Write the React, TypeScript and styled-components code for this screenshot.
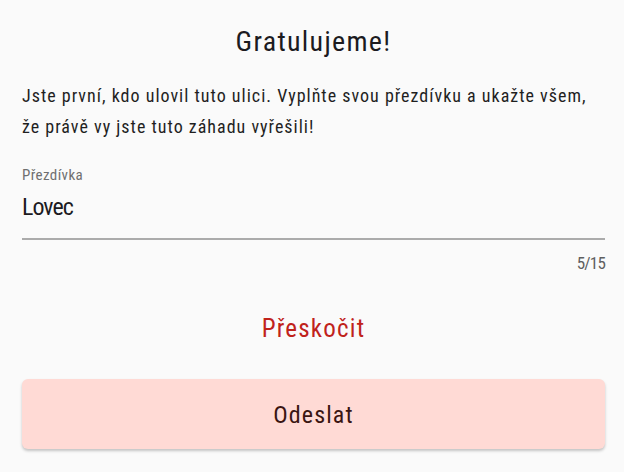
import { createGlobalStyle, styled } from "styled-components";

const GlobalStyle = createGlobalStyle`
  html, body {
    margin: 0;
    padding: 0;
    background: #fafafa;
  }
  body {
    font-family: Roboto, "DejaVu Sans Condensed", sans-serif;
    font-stretch: 80%;
    font-weight: 370;
    color: #1f1f1f;
  }
`;

const Wrapper = styled.div`
  display: flex;
  flex-direction: column;
  padding: 24px 19px 0 22px;
  min-height: 472px;
  box-sizing: border-box;
`;

const Title = styled.h2`
  margin: 0;
  font-size: 28px;
  line-height: 36px;
  font-weight: 370;
  letter-spacing: 1.3px;
  text-align: center;
  color: #1c1b1f;
`;

const Message = styled.p`
  margin: 20px 0 0;
  font-size: 18px;
  line-height: 31px;
  letter-spacing: 1px;
  color: #1f1f1f;
`;

//  Nickname field
const Field = styled.label`
  display: flex;
  flex-direction: column;
  margin-top: 24px;
  border-bottom: 2px solid #ababab;
  padding-bottom: 17px;
`;

const FieldLabel = styled.span`
  font-size: 15px;
  line-height: 18px;
  letter-spacing: 0.4px;
  color: #6f6f6f;
`;

const FieldInput = styled.input`
  margin-top: 9px;
  padding: 0;
  border: none;
  outline: none;
  background: transparent;
  font-family: inherit;
  font-weight: inherit;
  font-stretch: 75%;
  font-size: 24px;
  line-height: 28px;
  height: 28px;
  letter-spacing: -1px;
  color: #1c1b1f;
`;

const Counter = styled.div`
  margin-top: 13px;
  font-size: 17px;
  font-stretch: 75%;
  line-height: 20px;
  letter-spacing: -0.8px;
  color: #5f5f5f;
  text-align: right;
`;

const TextButton = styled.button`
  align-self: center;
  margin-top: 41px;
  padding: 0 8px;
  border: none;
  background: none;
  font-family: inherit;
  font-weight: inherit;
  font-stretch: inherit;
  font-size: 25px;
  line-height: 30px;
  letter-spacing: 1.2px;
  color: #c0221b;
  cursor: pointer;
`;

const SubmitButton = styled.button`
  margin-top: 35px;
  height: 70px;
  padding: 2px 0 0;
  border: none;
  border-radius: 6px;
  background: #ffdad5;
  box-shadow: 0 2px 3px rgba(0, 0, 0, 0.22);
  font-family: inherit;
  font-weight: inherit;
  font-stretch: inherit;
  font-size: 24px;
  letter-spacing: 1.1px;
  color: #3a1512;
  cursor: pointer;
`;

function App() {
  const nickname = "Lovec";
  const maxLength = 15;

  return (
    <>
      <GlobalStyle />
      <Wrapper>
        <Title>Gratulujeme!</Title>
        <Message>
          Jste první, kdo ulovil tuto ulici. Vyplňte svou přezdívku a ukažte
          všem,
          <br />
          že právě vy jste tuto záhadu vyřešili!
        </Message>
        <Field>
          <FieldLabel>Přezdívka</FieldLabel>
          <FieldInput defaultValue={nickname} maxLength={maxLength} />
        </Field>
        <Counter>
          {nickname.length}/{maxLength}
        </Counter>
        <TextButton>Přeskočit</TextButton>
        <SubmitButton>Odeslat</SubmitButton>
      </Wrapper>
    </>
  );
}

export default App;
